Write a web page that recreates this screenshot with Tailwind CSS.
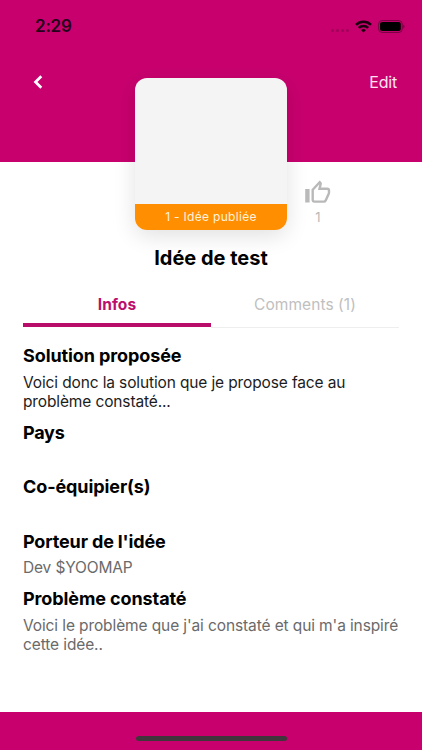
<!DOCTYPE html>
<html lang="fr">
<head>
<meta charset="utf-8">
<meta name="viewport" content="width=device-width, initial-scale=1">
<title>Idée de test</title>
<script src="https://cdn.jsdelivr.net/npm/@tailwindcss/browser@4"></script>
</head>
<body class="bg-white font-['Inter','Liberation_Sans',sans-serif] text-black">
<div class="flex h-[750px] w-[422px] flex-col overflow-hidden">
  <header class="h-[162px] shrink-0 bg-[#c8006e]">
    <div class="flex h-[52px] items-center justify-between pr-[17px] pl-[35px]">
      <span class="text-[17px] leading-5 font-semibold tracking-[-0.2px] text-[#25001a]">2:29</span>
      <div class="flex items-center">
        <div class="mt-[8px] mr-[6px] flex gap-[2px]">
          <i class="size-[3px] rounded-full bg-black/20"></i><i class="size-[3px] rounded-full bg-black/20"></i><i class="size-[3px] rounded-full bg-black/20"></i><i class="size-[3px] rounded-full bg-black/20"></i>
        </div>
        <svg class="mr-[6px] h-[13px] w-[17px]" viewBox="0 0 17 13" fill="none" stroke="#1c0010" stroke-width="2.6">
          <path d="M1 4.9a10.6 10.6 0 0 1 15 0"/><path d="M3.8 7.9a6.6 6.6 0 0 1 9.4 0"/><path d="M8.5 12.6 6.1 10.2a3.4 3.4 0 0 1 4.8 0z" fill="#1c0010" stroke="none"/>
        </svg>
        <svg class="h-[13px] w-[27px]" viewBox="0 0 27 13">
          <rect x=".6" y=".6" width="23.6" height="11.8" rx="3.4" fill="none" stroke="#000" stroke-opacity=".42"/>
          <rect x="2" y="2" width="20.8" height="9" rx="2" fill="#000"/>
          <path d="M25.3 4.4c1.6.7 1.6 3.5 0 4.2z" fill="#000" fill-opacity=".45"/>
        </svg>
      </div>
    </div>
    <nav class="flex h-[60px] items-center justify-between pr-[25px] pl-[33px]">
      <svg class="h-[14px] w-[10px]" viewBox="0 0 10 14" fill="none" stroke="#fff" stroke-width="2.7"><path d="M8.3 1.2 2.5 7l5.8 5.8"/></svg>
      <span class="text-[16px] leading-5 tracking-[-0.2px] text-[#ffe3f4]">Edit</span>
    </nav>
  </header>

  <section class="z-10 -mt-[84px] flex h-[152px] shrink-0 pl-[135px]">
    <div class="flex w-[152px] flex-col justify-end overflow-hidden rounded-[12px] bg-[#f4f4f4] shadow-[0_6px_22px_rgba(0,0,0,0.12)]">
      <div class="flex h-[26px] items-center justify-center bg-[#ff8f00] text-[12px] tracking-[0.3px] text-[#fff3dc]">1 - Idée publiée</div>
    </div>
    <div class="ml-[17px] flex w-[28px] flex-col items-center pt-[101px] text-[#b9b9b9]">
      <svg class="h-[26px] w-[28px] shrink-0" viewBox="0 0 28 26">
        <path d="M1.2 10h4.4v13.5H1.2z" fill="#b9b9b9"/>
        <path d="M8.7 10.8 15.7 3.2l.7.7c.3.3.4.7.3 1.1L15.5 9.8h7.7c1 0 1.8.8 1.8 1.8v2c0 .3-.1.6-.2.9l-3.1 6.9c-.4.8-1 1.2-1.8 1.2h-9.4c-1 0-1.8-.8-1.8-1.8z" fill="none" stroke="#b9b9b9" stroke-width="2.4"/>
      </svg>
      <span class="mt-[4px] text-[13px] leading-4">1</span>
    </div>
  </section>

  <main class="flex grow flex-col px-[23px]">
    <h1 class="mt-[16px] text-center text-[20px] leading-6 font-bold tracking-[0px]">Idée de test</h1>
    <div class="mt-[17px] flex h-[40px] text-[15.5px]">
      <div class="flex w-[188px] justify-center border-b-[4px] border-[#b80d68] pt-[8px] leading-5 font-bold tracking-[0.1px] text-[#bd0d6d]">Infos</div>
      <div class="flex h-[41px] w-[188px] justify-center border-b border-[#eeeeee] pt-[8px] leading-5 tracking-[0.06px] text-[#c0c0c0]">Comments (1)</div>
    </div>
    <h2 class="mt-[17px] text-[18px] leading-6 font-bold tracking-[-0.1px]">Solution proposée</h2>
    <p class="mt-[5px] text-[15.5px] leading-[19px] tracking-[-0.13px] whitespace-nowrap text-[#1c1c1c]">Voici donc la solution que je propose face au<br>problème constaté...</p>
    <h2 class="mt-[10px] text-[18px] leading-6 font-bold tracking-[-0.25px]">Pays</h2>
    <h2 class="mt-[30px] text-[18px] leading-6 font-bold tracking-[-0.1px]">Co-équipier(s)</h2>
    <h2 class="mt-[31px] text-[18px] leading-6 font-bold tracking-[-0.15px]">Porteur de l'idée</h2>
    <p class="mt-[4px] text-[15.5px] leading-[19px] tracking-[-0.15px] text-[#6a6a6a]">Dev $YOOMAP</p>
    <h2 class="mt-[10px] text-[18px] leading-6 font-bold tracking-[-0.1px]">Problème constaté</h2>
    <p class="mt-[5px] text-[15.5px] leading-[19px] tracking-[-0.11px] whitespace-nowrap text-[#6a6a6a]">Voici le problème que j'ai constaté et qui m'a inspiré<br>cette idée..</p>
  </main>

  <footer class="flex h-[38px] shrink-0 justify-center bg-[#c8006e] pt-[24px]">
    <div class="h-[5px] w-[151px] rounded-full bg-[#40353b]"></div>
  </footer>
</div>
</body>
</html>
